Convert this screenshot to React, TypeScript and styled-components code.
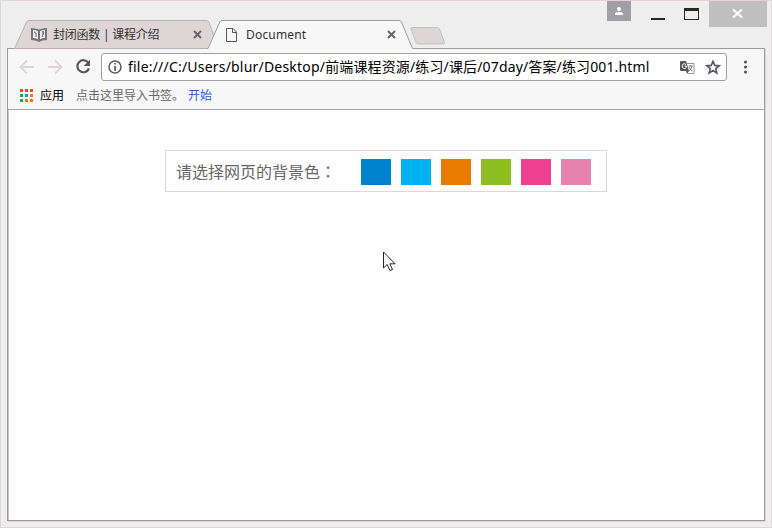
import React from "react";
import styled, { createGlobalStyle } from "styled-components";

const GlobalStyle = createGlobalStyle`
  * { box-sizing: border-box; }
  body { margin: 0; overflow: hidden; font-family: "Noto Sans", "Noto Sans CJK SC", sans-serif; }
  svg { display: block; flex: none; }
`;

const Window = styled.div`
  width: 772px;
  height: 528px;
  border: 1px solid #ded5d8;
  background: #eeeeee;
  display: flex;
  flex-direction: column;
`;

const TitleBar = styled.header`
  height: 47px;
  flex: none;
  display: flex;
  justify-content: space-between;
  padding: 0 4px 0 13px;
`;

const TabStrip = styled.div`
  display: flex;
  align-items: flex-end;
  height: 48px;
  position: relative;
  z-index: 1;
`;

const Tab = styled.div<{ $active?: boolean }>`
  position: relative;
  width: ${(p) => (p.$active ? 206 : 205)}px;
  height: 29px;
  margin-left: ${(p) => (p.$active ? -12 : 0)}px;
  padding: ${(p) => (p.$active ? "0 17px 0 19px" : "0 17px 0 17px")};
  display: flex;
  align-items: center;
`;

const TabShape = styled.svg`
  position: absolute;
  left: 0;
  top: 0;
  z-index: 0;
`;

const TabTitle = styled.span<{ $left: number; $spacing?: number }>`
  position: relative;
  flex: 1;
  margin-left: ${(p) => p.$left}px;
  font-size: 12px;
  line-height: 16px;
  letter-spacing: ${(p) => p.$spacing ?? 0}px;
  color: #333;
  white-space: pre;
`;

const TabIcon = styled.svg`
  position: relative;
`;

const NewTab = styled.svg`
  margin: 0 0 4px -3px;
`;

const Controls = styled.div`
  display: flex;
  align-items: flex-start;
`;

const UserButton = styled.button`
  width: 24px;
  height: 20px;
  padding: 4px 7px;
  border: 0;
  background: #a09fa4;
`;

const WindowButton = styled.button<{ $gap: number }>`
  margin: 6px 0 0 ${(p) => p.$gap}px;
  padding: 0;
  border: 0;
  background: none;
`;

const CloseButton = styled.button`
  display: flex;
  align-items: flex-start;
  width: 58px;
  height: 26px;
  margin-left: 10px;
  padding: 7px 0 0 23px;
  border: 0;
  background: #c0c0c0;
`;

const Frame = styled.main`
  width: 758px;
  height: 473px;
  margin-left: 6px;
  border: 1px solid #9b9b9e;
  box-shadow: inset 1px 0 #c9c9cb, 1px 1px #ddd5d7;
  background: #fff;
`;

const Toolbar = styled.div`
  height: 36px;
  padding: 4px 12px 4px 11px;
  display: flex;
  align-items: center;
  background: #f7f7f7;
`;

const NavIcons = styled.div`
  display: flex;
  gap: 12px;
  width: 82px;
  align-items: center;
`;

const AddressBar = styled.div`
  display: flex;
  align-items: center;
  width: 626px;
  height: 28px;
  padding: 0 5px 0 6px;
  border: 1px solid #a0a0a3;
  border-radius: 3px;
  background: #fff;
`;

const Url = styled.span`
  flex: 1;
  margin-left: 6px;
  display: flex;
  font-size: 14px;
  line-height: 20px;
  color: #000;
  white-space: nowrap;
`;

const UrlPart = styled.span<{ $spacing: number }>`
  letter-spacing: ${(p) => p.$spacing}px;
`;

const AddressIcons = styled.div`
  display: flex;
  align-items: center;
  gap: 10px;
`;

const MenuDots = styled.svg`
  margin-left: 16px;
`;

const Bookmarks = styled.div`
  height: 25px;
  padding: 0 0 3px 12px;
  display: flex;
  align-items: center;
  border-bottom: 1px solid #a5a5a8;
  background: #f7f7f7;
  font-size: 12px;
  line-height: 18px;
`;

const Bookmark = styled.span<{ $left: number; $color: string }>`
  margin-left: ${(p) => p.$left}px;
  color: ${(p) => p.$color};
  white-space: nowrap;
`;

const Picker = styled.section`
  width: 442px;
  height: 42px;
  margin: 40px 0 0 157px;
  padding: 0 10px;
  display: flex;
  align-items: center;
  border: 1px solid #ddd5d7;
`;

const PickerLabel = styled.label`
  width: 185px;
  font-size: 16px;
  line-height: 24px;
  color: #666;
  white-space: nowrap;
`;

const Colon = styled.span`
  font-family: "Noto Sans CJK TC", sans-serif;
`;

const Swatches = styled.div`
  display: flex;
  gap: 10px;
  margin-top: 2px;
`;

const Swatch = styled.button<{ $color: string }>`
  width: 30px;
  height: 26px;
  padding: 0;
  border: 0;
  background: ${(p) => p.$color};
`;

const Pointer = styled.svg`
  position: absolute;
  left: 383px;
  top: 251px;
`;

const colors = ["#0084cf", "#00b3f0", "#e77c00", "#8dbe22", "#f04092", "#e783ae"];
const appColors = ["#fb4035", "#fb4035", "#fb4035", "#2da05a", "#1e8cf5", "#e77c00", "#2da05a", "#e77c00", "#e77c00"];

const TabClose = () => (
  <TabIcon width="9" height="9" viewBox="0 0 9 9">
    <path d="M1 1l7 7M8 1L1 8" stroke="#66646a" strokeWidth="1.9" />
  </TabIcon>
);

export default function App() {
  return (
    <>
      <GlobalStyle />
      <Window>
        <TitleBar>
          <TabStrip>
            <Tab>
              <TabShape width="205" height="29" viewBox="0 0 205 29">
                <path d="M.5 28.5L12.500 2.200Q13.500.5 15 .5H192Q194 .5 195 2.200L204.500 28.500Z" fill="#ded5d6" stroke="#b9b1b5" />
              </TabShape>
              <TabIcon width="16" height="14" viewBox="0 0 16 14">
                <path d="M0 0q4.500 0 8 1.600Q11.500 0 16 0v12q-5 0-8 2-3-2-8-2z" fill="#77757a" />
                <path d="M2 2q3 0 5 1.300v8Q5 10 2 10zM14 2q-3 0-5 1.300v8q2-1.300 5-1.300z" fill="#eee8ea" />
                <path d="M3 4l2 1v4M11 4h2l-2 5M12 3v4" fill="none" stroke="#77757a" />
              </TabIcon>
              <TabTitle $left={6} $spacing={-0.23}>封闭函数 | 课程介绍</TabTitle>
              <TabClose />
            </Tab>
            <Tab $active>
              <TabShape width="206" height="29" viewBox="0 0 206 29">
                <path d="M0 29L12.500 2Q13.200.5 15 .5H192Q193.800.5 194.500 2L206 29Z" fill="#f7f7f7" />
                <path d="M0 28.500H1L12.800 2Q13.500.5 15.300.5H192Q193.800.5 194.500 2L205.500 28.500" fill="none" stroke="#9b9b9e" />
              </TabShape>
              <TabIcon width="11" height="14" viewBox="0 0 11 14">
                <path d="M.5.5H7L10.500 4v9.500H.5zM6.500.5v4h4" fill="none" stroke="#59565f" />
              </TabIcon>
              <TabTitle $left={9} $spacing={0.18}>Document</TabTitle>
              <TabClose />
            </Tab>
            <NewTab width="36" height="18" viewBox="0 0 36 18">
              <path d="M1 2Q.5.5 2 .5H27.500Q29 .5 29.500 2L34.500 15.500Q35 17 33.500 17H8Q6.500 17 6 15.500Z" fill="#ded5d6" stroke="#c4c1c3" />
            </NewTab>
          </TabStrip>
          <Controls>
            <UserButton aria-label="用户">
              <svg width="10" height="10" viewBox="0 0 10 10"><circle cx="5" cy="3" r="2" fill="#fff" /><path d="M1 9V7.500Q1 6 5 6t4 1.500V9z" fill="#fff" /></svg>
            </UserButton>
            <WindowButton $gap={20} aria-label="最小化">
              <svg width="14" height="13" viewBox="0 0 14 13"><path d="M0 11h14v2H0z" fill="#292a26" /></svg>
            </WindowButton>
            <WindowButton $gap={19} aria-label="最大化">
              <svg width="15" height="13" viewBox="0 0 15 13"><path d="M0 1h15v12H0zM1 4v8h13V4z" fill="#292a26" fillRule="evenodd" /></svg>
            </WindowButton>
            <CloseButton aria-label="关闭">
              <svg width="11" height="11" viewBox="0 0 11 11"><path d="M1 1.500l9 8M10 1.500l-9 8" stroke="#fff" strokeWidth="2" /></svg>
            </CloseButton>
          </Controls>
        </TitleBar>
        <Frame>
          <Toolbar>
            <NavIcons>
              <svg width="16" height="16" viewBox="0 0 16 16"><path d="M15 8H2M8 1.500L1.500 8 8 14.500" fill="none" stroke="#ddd5d7" strokeWidth="2" /></svg>
              <svg width="16" height="16" viewBox="0 0 16 16"><path d="M1 8h13M8 1.500L14.500 8 8 14.500" fill="none" stroke="#ddd5d7" strokeWidth="2" /></svg>
              <svg width="16" height="16" viewBox="0 0 16 16"><path d="M13.500 4A6 6 0 1 0 14 9.500" fill="none" stroke="#59565f" strokeWidth="2.200" /><path d="M15 .7V7H8.700z" fill="#59565f" /></svg>
            </NavIcons>
            <AddressBar>
              <svg width="14" height="14" viewBox="0 0 14 14"><circle cx="7" cy="7" r="6" fill="none" stroke="#59565f" strokeWidth="1.500" /><path d="M6.200 3h1.700v1.600H6.200zM6.200 6h1.700v5H6.200z" fill="#59565f" /></svg>
              <Url>
                <UrlPart $spacing={0.2}>file:///C:/Users/blur/Desktop/</UrlPart>
                <UrlPart $spacing={0.14}>前端课程资源/练习/课后/07day/答案/练习001.html</UrlPart>
              </Url>
              <AddressIcons>
                <svg width="15" height="15" viewBox="0 0 15 15">
                  <path d="M6 3.500h8v10H8" fill="#fff" stroke="#99969c" />
                  <path d="M1 1h5l3 10H1Q0 11 0 10V2q0-1 1-1zM6 11h3l-2 3z" fill="#59565f" />
                  <path d="M6 4.500Q4.500 3 3 4.200t-.5 3T5 8.500 6.500 6H4.500" fill="none" stroke="#fff" />
                  <path d="M8.500 6h4.500M10.700 5v1M12 6q-.5 3-3 5M9 7q1 3 3.500 4" fill="none" stroke="#77747b" strokeWidth=".9" />
                </svg>
                <svg width="16" height="16" viewBox="0 0 16 16"><path d="M8 2.300l1.700 4.100 4.400.3-3.400 2.900 1.100 4.300L8 11.500l-3.800 2.400 1.100-4.300-3.400-2.900 4.400-.3z" fill="none" stroke="#59565f" strokeWidth="1.600" /></svg>
              </AddressIcons>
            </AddressBar>
            <MenuDots width="5" height="14" viewBox="0 0 5 14">
              <circle cx="2.500" cy="2" r="1.600" fill="#59565f" /><circle cx="2.500" cy="7" r="1.600" fill="#59565f" /><circle cx="2.500" cy="12" r="1.600" fill="#59565f" />
            </MenuDots>
          </Toolbar>
          <Bookmarks>
            <svg width="13" height="13" viewBox="0 0 13 13">
              {appColors.map((c, i) => <rect key={i} x={(i % 3) * 5} y={Math.floor(i / 3) * 5} width="3" height="3" fill={c} />)}
            </svg>
            <Bookmark $left={7} $color="#000">应用</Bookmark>
            <Bookmark $left={12} $color="#666">点击这里导入书签。</Bookmark>
            <Bookmark $left={4} $color="#2e5bd8">开始</Bookmark>
          </Bookmarks>
          <Picker>
            <PickerLabel>请选择网页的背景色<Colon lang="zh-TW">：</Colon></PickerLabel>
            <Swatches>{colors.map((c) => <Swatch key={c} $color={c} />)}</Swatches>
          </Picker>
        </Frame>
        <Pointer width="13" height="21" viewBox="0 0 13 21">
          <path d="M.5 1v16l3.700-3.500L7 19.500l2.500-1-2.700-5.700H12z" fill="#fff" stroke="#25222e" />
        </Pointer>
      </Window>
    </>
  );
}
